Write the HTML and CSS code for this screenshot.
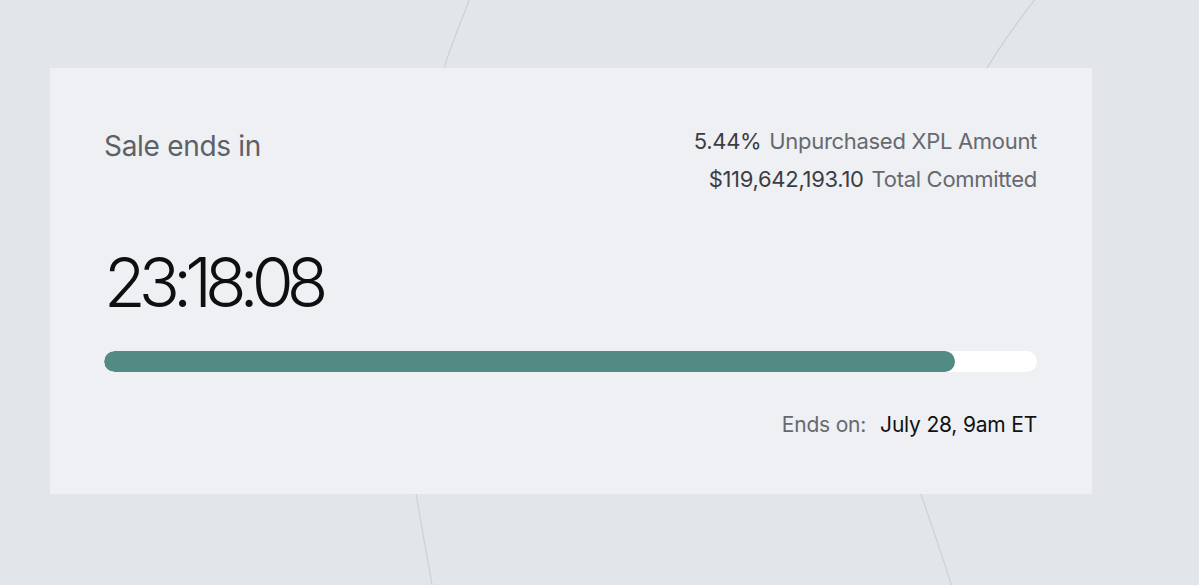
FILE: index.html
```html
<!DOCTYPE html>
<html>
<head>
<meta charset="utf-8">
<link rel="stylesheet" href="styles.css">
</head>
<body>
<div class="stage">
  <svg class="curves" width="1199" height="585" viewBox="0 0 1199 585">
    <path d="M470 -2 C 458 30, 446 55, 432 110" />
    <path d="M1036 -2 C 1015 25, 998 48, 980 80" />
    <path d="M414 480 C 420 520, 426 550, 433 590" />
    <path d="M916 480 C 930 520, 942 555, 953 590" />
  </svg>
  <section class="card">
    <div class="top">
      <div class="label">Sale ends in</div>
      <div class="stats">
        <div class="stat"><span class="num">5.44%</span> Unpurchased XPL Amount</div>
        <div class="stat"><span class="num">$119,642,193.10</span> Total Committed</div>
      </div>
    </div>
    <div class="timer">23:18:08</div>
    <div class="track"><div class="fill" style="width:91.2%"></div></div>
    <div class="ends"><span class="ends-label">Ends on:</span><span class="ends-date">July 28, 9am ET</span></div>
  </section>
</div>
</body>
</html>
```
FILE: styles.css
```css
* { box-sizing: border-box; }
html, body { margin: 0; padding: 0; }
body {
  background: #e2e5e9;
  font-family: Inter, "Noto Sans", sans-serif;
  width: 1199px;
  height: 585px;
  overflow: hidden;
}
.stage {
  position: relative;
  width: 1199px;
  height: 585px;
  padding: 68px 107px 0 50px;
}
.curves {
  position: absolute;
  left: 0;
  top: 0;
}
.curves path {
  fill: none;
  stroke: #cdd1d6;
  stroke-width: 1.2;
}
.card {
  position: relative;
  background: #eef0f3;
  width: 1042px;
  height: 426px;
  padding: 54px 55px 0 54px;
}
.top {
  display: flex;
  justify-content: space-between;
  align-items: flex-start;
}
.label {
  font-size: 28px;
  color: #5d6066;
  margin-top: 7px;
  letter-spacing: -0.3px;
}
.stats {
  text-align: right;
  font-size: 22px;
  color: #66696f;
  letter-spacing: -0.3px;
}
.stat { line-height: 38px; }
.num { color: #3b3d42; margin-right: 2px; }
.timer {
  margin-top: 50px;
  font-size: 68px;
  font-weight: 300;
  color: #0e0f11;
  line-height: 1;
  letter-spacing: -7px;
}
.track {
  margin-top: 35px;
  height: 21px;
  background: #ffffff;
  border-radius: 11px;
  overflow: hidden;
}
.fill {
  height: 100%;
  background: #528a84;
  border-radius: 11px;
}
.ends {
  margin-top: 40px;
  display: flex;
  justify-content: flex-end;
  gap: 14px;
  font-size: 21px;
  letter-spacing: -0.2px;
}
.ends-label { color: #66696f; }
.ends-date { color: #111214; }
```
